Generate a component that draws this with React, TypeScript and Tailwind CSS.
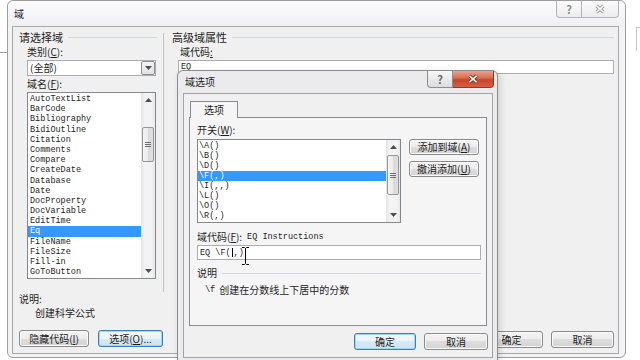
import type { ReactNode } from 'react'

const mono = "font-[family-name:'Liberation_Mono','Noto_Sans_CJK_SC',monospace] text-[8.5px]"

function Key({ k }: { k: string }) {
  return (
    <>
      (<span className="underline">{k}</span>)
    </>
  )
}

function Button({ children, focused = false, className = '' }: { children: ReactNode; focused?: boolean; className?: string }) {
  return (
    <div
      className={`flex items-center justify-center rounded-[3px] border ${
        focused
          ? 'border-[#3c7fb1] bg-[linear-gradient(#f4f9fc,#e9f3f9_50%,#d9e9f3_50%,#cfe3ef)] shadow-[inset_0_0_0_1px_#9fd6f2]'
          : 'border-[#8a8a8a] bg-[linear-gradient(#f4f4f4,#ececec_50%,#dedede_50%,#d3d3d3)] shadow-[inset_0_0_0_1px_#fafafa]'
      } ${className}`}
    >
      {children}
    </div>
  )
}

function Arrow({ up }: { up?: boolean }) {
  return (
    <svg width="7" height="4" viewBox="0 0 7 4">
      <path d={up ? 'M0 4L3.5 0L7 4Z' : 'M0 0L3.5 4L7 0Z'} fill="#4d4d4d" />
    </svg>
  )
}

function ScrollBar({ thumb }: { thumb: string }) {
  return (
    <div className="w-[14px] h-full flex flex-col items-center bg-[linear-gradient(90deg,#e3e3e3,#f3f3f3_25%,#f3f3f3_75%,#e8e8e8)]">
      <div className="h-[14px] w-full flex items-center justify-center">
        <Arrow up />
      </div>
      <div
        className={`w-[12px] rounded-[2px] border border-[#979797] bg-[linear-gradient(90deg,#f5f5f5,#ebebeb_50%,#dadada_50%,#dedede)] flex flex-col items-center justify-center gap-[1px] ${thumb}`}
      >
        <div className="w-[6px] h-px bg-[#6f6f6f]" />
        <div className="w-[6px] h-px bg-[#6f6f6f]" />
        <div className="w-[6px] h-px bg-[#6f6f6f]" />
      </div>
      <div className="mt-auto h-[14px] w-full flex items-center justify-center">
        <Arrow />
      </div>
    </div>
  )
}

function GroupHeader({ title }: { title: string }) {
  return (
    <div className="flex items-center">
      <span className="text-[11px]">{title}</span>
      <div className="ml-[5px] flex-1 h-px bg-[#d3d9dd]" />
    </div>
  )
}

function CloseGlyph({ outer, inner }: { outer: string; inner: string }) {
  return (
    <svg width="12" height="10" viewBox="0 0 12 10">
      <path d="M2.5 1.8L9.5 8.2M9.5 1.8L2.5 8.2" stroke={outer} strokeWidth="3.4" />
      <path d="M2.5 1.8L9.5 8.2M9.5 1.8L2.5 8.2" stroke={inner} strokeWidth="1.6" />
    </svg>
  )
}

const fields = [
  'AutoTextList',
  'BarCode',
  'Bibliography',
  'BidiOutline',
  'Citation',
  'Comments',
  'Compare',
  'CreateDate',
  'Database',
  'Date',
  'DocProperty',
  'DocVariable',
  'EditTime',
  'Eq',
  'FileName',
  'FileSize',
  'Fill-in',
  'GoToButton',
]

const switches = ['\\A()', '\\B()', '\\D()', '\\F(,)', '\\I(,,)', '\\L()', '\\O()', '\\R(,)']

function OuterDialog() {
  return (
    <div className="absolute left-[7px] top-0 w-[619px] h-[358px] flex flex-col rounded-[6px] border border-[#9d9d9d] bg-[#f3f3f5]">
      <div className="relative h-[25px] flex items-center pl-[6px] rounded-t-[6px] bg-[linear-gradient(#fcfcfd,#f0f0f3)]">
        <span className="text-[10px]">域</span>
        <div className="absolute right-[6px] top-0 flex">
          <div className="w-[26px] h-[17px] flex items-center justify-center rounded-bl-[4px] border border-t-0 border-[#b4b4b4] bg-[linear-gradient(#fbfbfb,#ececee)] text-[11px] font-bold text-[#8a8a8a]">
            ?
          </div>
          <div className="w-[37px] h-[17px] flex items-center justify-center rounded-br-[4px] border border-t-0 border-l-0 border-[#b4b4b4] bg-[linear-gradient(#fbfbfb,#ececee)]">
            <CloseGlyph outer="#9a9a9a" inner="#f6f6f7" />
          </div>
        </div>
      </div>

      <div className="ml-[4px] mr-[6px] h-[328px] flex border border-[#a9a9a9] bg-[#f0f0f0]">
        <div className="w-[150px] flex flex-col pt-[4px] pl-[6px]">
          <div className="mr-[6px]">
            <GroupHeader title="请选择域" />
          </div>
          <div className="mt-[3px] ml-[8px]">
            类别<Key k="C" />:
          </div>
          <div className="mt-[2px] ml-[8px] w-[129px] h-[16px] flex items-center border border-[#abadb3] bg-white">
            <span className="flex-1 pl-[2px]">(全部)</span>
            <div className="w-[14px] h-[14px] flex items-center justify-center rounded-[2px] border border-[#8e8f8f] bg-[linear-gradient(#f4f4f4,#e2e2e2)]">
              <Arrow />
            </div>
          </div>
          <div className="mt-[2px] ml-[8px]">
            域名<Key k="F" />:
          </div>
          <div className="mt-[2px] ml-[8px] w-[129px] h-[187px] flex border border-[#828790] bg-white">
            <div className={`flex-1 pt-px ${mono}`}>
              {fields.map((f) => (
                <div
                  key={f}
                  className={`h-[10.2px] leading-[10.2px] pl-[2px] ${f === 'Eq' ? 'bg-[#3399ff] text-white' : ''}`}
                >
                  {f}
                </div>
              ))}
            </div>
            <ScrollBar thumb="mt-[20px] h-[35px]" />
          </div>
          <div className="mt-[14px]">说明:</div>
          <div className="mt-[2px] ml-[16px]">创建科学公式</div>
          <div className="mt-[11px] flex gap-[9px]">
            <Button className="w-[70px] h-[17px]">
              隐藏代码<Key k="I" />
            </Button>
            <Button focused className="w-[65px] h-[17px]">
              选项<Key k="O" />...
            </Button>
          </div>
        </div>

        <div className="mt-[6px] w-px h-[259px] bg-[#c4c4c4]" />

        <div className="flex-1 flex flex-col pt-[4px] pl-[8px] pr-[4px] pb-[5px]">
          <GroupHeader title="高级域属性" />
          <div className="mt-[3px] ml-[8px]">
            域代码<span className="underline">:</span>
          </div>
          <div className={`mt-[2px] ml-[6px] h-[14px] flex items-center pl-[2px] border border-[#abadb3] bg-white ${mono}`}>
            EQ
          </div>
          <div className="mt-auto flex justify-end gap-[8px]">
            <Button className="w-[63px] h-[17px]">确定</Button>
            <Button className="w-[63px] h-[17px]">取消</Button>
          </div>
        </div>
      </div>
    </div>
  )
}

function InnerDialog() {
  return (
    <div className="absolute left-[177px] top-[70px] w-[321px] h-[295px] flex flex-col rounded-t-[6px] border border-[#8c8c8c] bg-[#ebebee] shadow-[2px_2px_6px_rgba(0,0,0,0.15)]">
      <div className="relative h-[22px] flex items-center pl-[7px]">
        <span>域选项</span>
        <div className="absolute right-[3px] top-0 flex">
          <div className="w-[26px] h-[17px] flex items-center justify-center rounded-bl-[4px] border border-t-0 border-[#8d8d8d] bg-[linear-gradient(#f7f7f7,#dcdcdc)] text-[11px] font-bold text-[#6a6a6a]">
            ?
          </div>
          <div className="w-[41px] h-[17px] flex items-center justify-center rounded-br-[4px] border border-t-0 border-l-0 border-[#8c3a28] bg-[linear-gradient(#eda28f,#d9694f_45%,#c8452a_55%,#d45f42)]">
            <CloseGlyph outer="#7c2b1c" inner="#ffffff" />
          </div>
        </div>
      </div>

      <div className="ml-[5px] mr-[4px] h-[265px] flex flex-col pt-[7px] border border-[#a3a3a3] bg-[#f0f0f0]">
        <div className="relative z-10 -mb-px ml-[6px] w-[48px] h-[17px] flex items-center justify-center border border-b-0 border-[#898c95] bg-[#f5f5f5]">
          选项
        </div>
        <div className="ml-[5px] w-[298px] h-[209px] flex flex-col pt-[6px] pl-[7px] border border-[#898c95] bg-[#f5f5f5]">
          <div>
            开关<Key k="W" />:
          </div>
          <div className="mt-[3px] flex">
            <div className="w-[204px] h-[84px] flex border border-[#828790] bg-white">
              <div className={`flex-1 pt-px ${mono}`}>
                {switches.map((s) => (
                  <div
                    key={s}
                    className={`h-[10px] leading-[10px] pl-px ${s === '\\F(,)' ? 'bg-[#3399ff] text-white' : ''}`}
                  >
                    {s}
                  </div>
                ))}
              </div>
              <ScrollBar thumb="mt-px h-[40px]" />
            </div>
            <div className="ml-[8px] flex flex-col gap-[6px]">
              <Button className="w-[70px] h-[16px]">
                添加到域<Key k="A" />
              </Button>
              <Button className="w-[70px] h-[16px]">
                撤消添加<Key k="U" />
              </Button>
            </div>
          </div>
          <div className="mt-[8px] flex items-center">
            <span>
              域代码<Key k="F" />:
            </span>
            <span className={`ml-[5px] ${mono}`}>EQ Instructions</span>
          </div>
          <div className={`mt-[2px] w-[284px] h-[15px] flex items-center pl-[2px] border border-[#abadb3] bg-white ${mono}`}>
            EQ \F(<span className="inline-block w-px h-[9px] bg-black mx-px" />,)
          </div>
          <div className="mt-[7px] w-[284px] flex items-center">
            <span>说明</span>
            <div className="ml-[5px] flex-1 h-px bg-[#d3d9dd]" />
          </div>
          <div className="mt-[5px] pl-[8px] flex items-center">
            <span className={mono}>\f</span>
            <span className="ml-[4px]">创建在分数线上下居中的分数</span>
          </div>
        </div>
        <div className="mt-[7px] pr-[4px] flex justify-end gap-[8px]">
          <Button focused className="w-[62px] h-[17px]">
            确定
          </Button>
          <Button className="w-[64px] h-[17px]">取消</Button>
        </div>
      </div>
    </div>
  )
}

export default function App() {
  return (
    <div className="relative w-[640px] h-[360px] overflow-hidden bg-white text-[10px] leading-[12px] text-[#1e1e1e] font-[family-name:'Noto_Sans_CJK_SC','Noto_Sans',sans-serif]">
      <div className="absolute left-0 top-[52px] w-[8px] h-px bg-[#9c9c9c]" />
      <div className="absolute left-[636px] top-[27px] w-[6px] h-[24px] border-l border-t border-[#c4c4c4]" />
      <OuterDialog />
      <InnerDialog />
      <svg className="absolute left-[241px] top-[247px]" width="9" height="18" viewBox="0 0 9 18">
        <path d="M1 0.5h2.5l1 1l1-1H8M4.5 1.5v15M1 17.5h2.5l1-1l1 1H8" stroke="#000" fill="none" />
      </svg>
    </div>
  )
}
